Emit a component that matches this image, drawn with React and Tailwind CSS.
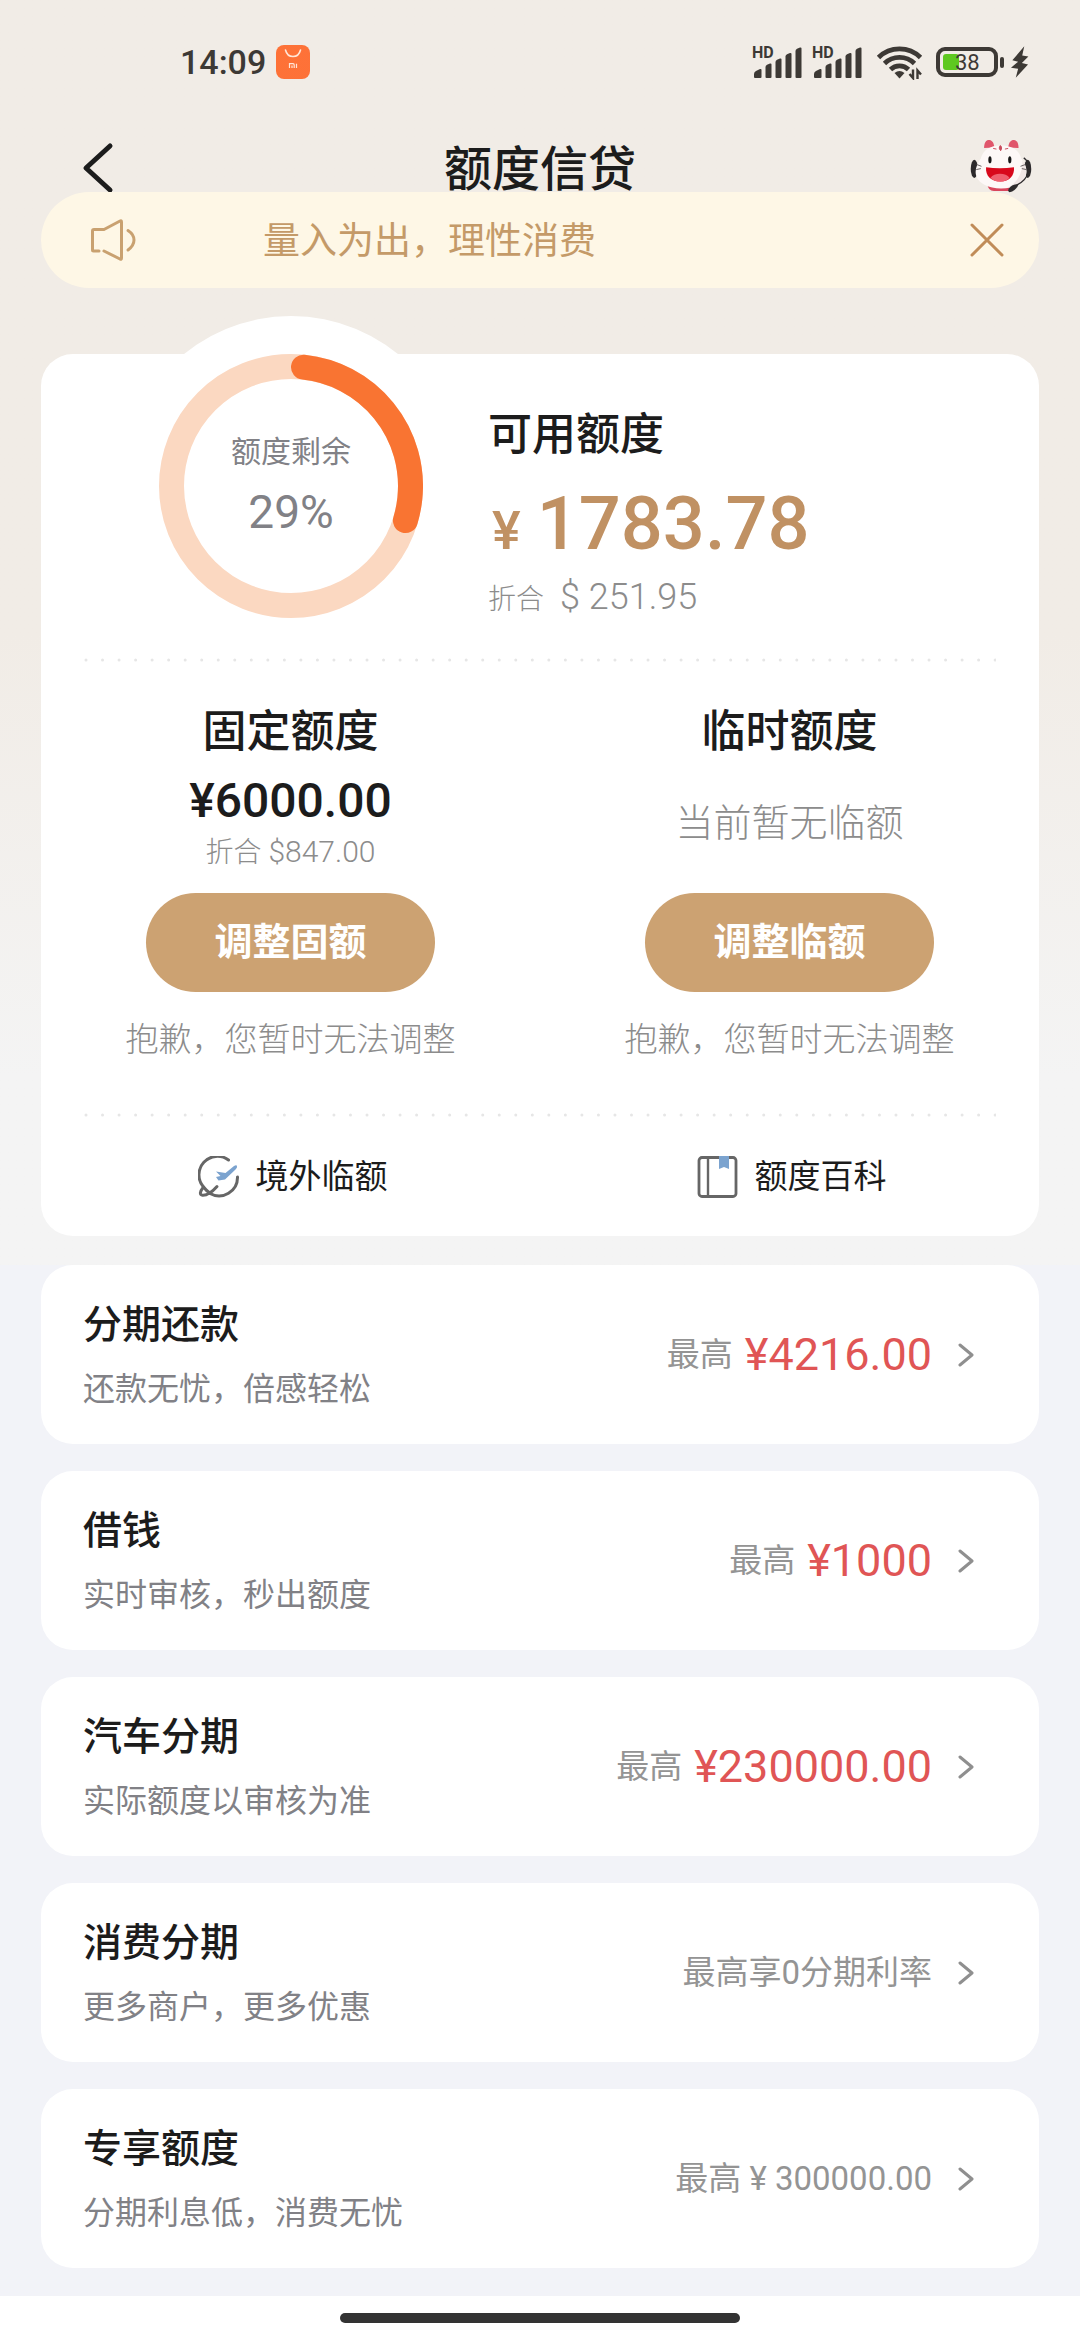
import React, { useState } from "react";

const PRODUCTS = [
  { name: "分期还款", desc: "还款无忧，倍感轻松", label: "最高", amount: "¥4216.00" },
  { name: "借钱", desc: "实时审核，秒出额度", label: "最高", amount: "¥1000" },
  { name: "汽车分期", desc: "实际额度以审核为准", label: "最高", amount: "¥230000.00" },
  { name: "消费分期", desc: "更多商户，更多优惠", label: "最高享0分期利率" },
  { name: "专享额度", desc: "分期利息低，消费无忧", label: "最高 ¥ 300000.00" },
];

function MiStoreIcon() {
  return (
    <svg className="size-[34px]" viewBox="0 0 34 34" fill="none">
      <defs>
        <linearGradient id="mi" x1="0" y1="34" x2="34" y2="0">
          <stop stopColor="#ff6f20" />
          <stop offset="1" stopColor="#fc744f" />
        </linearGradient>
      </defs>
      <rect width="34" height="34" rx="8" fill="url(#mi)" />
      <path d="M9.5 5c1 4 4 6.500 7.500 6.500S23.500 9 24.500 5" stroke="#ffe6d8" strokeWidth="1.600" strokeLinecap="round" />
      <path d="M13.500 23v-4.300h3.500q1.200 0 1.200 1.200V23M16 20.500V23M20.500 18.700V23" stroke="#ffe6d8" strokeWidth="1.200" />
    </svg>
  );
}

function Signal() {
  return (
    <svg className="h-[42px] w-[52px] overflow-visible" viewBox="0 -4 52 42" fill="#3d3935">
      <text x="0" y="13" fontSize="16" fontWeight="700" fontFamily="Roboto, sans-serif">HD</text>
      <path d="M2 32v-3q0-2 2-3l4-2q1.500-.5 1.500 1v7q0 1-1 1H3q-1 0-1-1z" />
      <path d="M13.500 32V22q0-1.500 1.500-2.200l3-1.200q1.500-.4 1.500 1V32q0 1-1 1h-4q-1 0-1-1z" />
      <path d="M23.500 32V17q0-1.500 1.500-2.200l3-1.200q1.500-.4 1.500 1V32q0 1-1 1h-4q-1 0-1-1z" />
      <path d="M33.500 32V11.500q0-1.500 1.500-2.200l3-1.200q1.500-.4 1.500 1V32q0 1-1 1h-4q-1 0-1-1z" />
      <path d="M43.500 32V6q0-1.500 1.500-2.200l3-1.200q1.500-.4 1.500 1V32q0 1-1 1h-4q-1 0-1-1z" />
    </svg>
  );
}

function Wifi() {
  return (
    <svg className="h-[36px] w-[48px]" viewBox="0 0 48 36" fill="none" stroke="#3d3935" strokeWidth="4.800">
      <path d="M2.500 13.500a30 30 0 0 1 42 0" />
      <path d="M8.500 19.500a21.500 21.500 0 0 1 30 0" />
      <path d="M14.500 25.500a13 13 0 0 1 18 0" />
      <path d="M18.500 29q5-4 10 0l-5 5.500z" fill="#3d3935" stroke="none" />
      <path d="M37 25.500V34l-3.500-4M41.500 35v-8.500l3.500 4" strokeWidth="2.400" />
    </svg>
  );
}

function Battery() {
  return (
    <svg className="h-[32px] w-[70px]" viewBox="0 0 70 32" fill="#3d3935">
      <rect x="2" y="3" width="58" height="26" rx="7" fill="none" stroke="#3d3935" strokeWidth="4" />
      <rect x="7" y="8" width="16" height="16" rx="3" fill="#5ec820" />
      <rect x="64" y="11" width="4" height="11" rx="2" />
      <text x="19" y="24" fontSize="22" fontFamily="Roboto, sans-serif">38</text>
    </svg>
  );
}

function Bolt() {
  return (
    <svg className="h-[32px] w-[19px]" viewBox="0 0 54 94" fill="#3d3935">
      <path d="M41 1 6 42l17 4L2 64l21 3-7 26 36-39-18-4 19-19-18-3z" />
    </svg>
  );
}

function Mascot() {
  return (
    <svg className="h-[54px] w-[62px]" viewBox="0 0 188 166" fill="none">
      <path d="M42 28C42 6 52 0 62 4c10 5 10 14 12 22zM148 28C148 6 138 0 128 4c-10 5-10 14-12 22z" fill="#e0566b" />
      <ellipse cx="12" cy="92" rx="11" ry="28" fill="#2d2a2c" />
      <ellipse cx="176" cy="92" rx="11" ry="28" fill="#2d2a2c" />
      <path d="M52 138h90q-2 20-22 22H72q-18-2-20-22z" fill="#d9465c" />
      <path d="M94 20c34 0 56 14 62 40 14 16 20 36 14 54-8 24-38 38-76 38s-68-14-76-38c-6-18 2-38 14-54 6-26 28-40 62-40z" fill="#fdf8f7" />
      <path d="M160 66c14 20 16 40 4 58-8 14-26 22-48 26 28-18 44-42 44-84z" fill="#f0e6e5" />
      <path d="M92 20c5 4 5 10 1 16-5-5-6-11-1-16zM70 29l10 2M116 29l-10 2" fill="#c94b5c" stroke="#c94b5c" strokeWidth="3" />
      <ellipse cx="60" cy="64" rx="5" ry="11" fill="#171717" />
      <ellipse cx="121" cy="64" rx="5" ry="11" fill="#171717" />
      <path d="M48 87q42 6 86 0c2 26-14 44-42 44S46 114 48 87z" fill="#d8081c" />
      <path d="M62 119c10-16 48-16 58 0-12 16-46 16-58 0z" fill="#ef6070" />
      <path d="M18 78l16 6M18 94l14-3M170 78l-16 6M172 94l-14-3" stroke="#4a4345" strokeWidth="2.500" />
      <path d="M164 58c14 10 18 24 14 42-4 20-18 34-40 44" stroke="#2d2a2c" strokeWidth="4" />
      <path d="M118 152q10-14 30-13-8 22-28 25-6-4-2-12z" fill="#2d2a2c" />
    </svg>
  );
}

function Speaker() {
  return (
    <svg className="h-[44px] w-[48px]" viewBox="0 0 48 44" fill="none" stroke="#c9a170" strokeWidth="3" strokeLinecap="round" strokeLinejoin="round">
      <path d="M10 33H4.500q-1 0-1-1V13q0-1.500 1.500-1.500h10L31 3q1.500-.8 1.500 1v36q0 2-1.500 1L15 33" />
      <path d="M39 12.500q6 4 6 9.500t-6 10" />
    </svg>
  );
}

function GlobePlane() {
  return (
    <svg className="size-[42px]" viewBox="0 0 42 42" fill="none">
      <path d="M30.500 4A18.500 18.500 0 0 0 5.500 31" stroke="#666" strokeWidth="3" strokeLinecap="round" />
      <path d="M39.500 21A18.500 18.500 0 0 1 12 37.500" stroke="#666" strokeWidth="3" strokeLinecap="round" />
      <path d="M5.500 31C1.500 36 1.500 39 4.500 39.200 9 39.500 15 35 19 30.500" stroke="#666" strokeWidth="3" strokeLinecap="round" />
      <path d="M5.500 31q3 4 7 6.500" stroke="#666" strokeWidth="3" />
      <path d="M18 15.500l9.500 1.500 8.500-7q2.500-1.500 3 0 .5 1.500-1.500 3.500L27 23.500l-6.500 1-2.500-3.500 4.500-1z" fill="#7ba3cf" />
    </svg>
  );
}

function Book() {
  return (
    <svg className="size-[42px]" viewBox="0 0 42 42" fill="none">
      <rect x="2" y="1.500" width="37" height="39" rx="3" stroke="#666" strokeWidth="2.800" />
      <path d="M11 1.500v39" stroke="#666" strokeWidth="2.400" />
      <path d="M22 0h10v13l-5-2-5 2z" fill="#7ba3cf" />
    </svg>
  );
}

function DottedLine() {
  return (
    <svg className="block h-1 w-full">
      <line x1="2" y1="2" x2="100%" y2="2" stroke="#e6e6e6" strokeWidth="3" strokeLinecap="round" strokeDasharray="0 16.530" />
    </svg>
  );
}

function Gauge({ percent }) {
  return (
    <div className="relative size-[264px] shrink-0">
      <div className="absolute -inset-[38px] rounded-full bg-white" />
      <svg className="absolute inset-0" viewBox="0 0 264 264" fill="none" strokeWidth="25">
        <circle cx="132" cy="132" r="119.500" stroke="#fbd8c1" />
        <circle
          cx="132" cy="132" r="119.500" stroke="#f97432" strokeLinecap="round" pathLength="100"
          strokeDasharray={`${percent - 1} 100`} transform="rotate(-84 132 132)"
        />
      </svg>
      <div className="relative flex h-full flex-col items-center justify-center pb-1 text-[#818186]">
        <span className="text-[30px] leading-[48px]">额度剩余</span>
        <span className="mt-2 text-[46px] leading-[56px]">{percent}%</span>
      </div>
    </div>
  );
}

function Quota({ title, action, children }) {
  return (
    <div className="flex flex-1 flex-col items-center">
      <h2 className="text-[44px] leading-[56px] font-medium text-[#1c1c1c]">{title}</h2>
      <div className="flex h-[133px] flex-col items-center justify-center pb-2">{children}</div>
      <button className="h-[99px] w-[289px] rounded-full bg-[#cca272] text-[38px] font-bold text-white">{action}</button>
      <p className="mt-6 text-[33px] leading-[48px] font-light text-[#8c8c8c]">抱歉，您暂时无法调整</p>
    </div>
  );
}

export default function App() {
  const [notice, setNotice] = useState(true);
  return (
    <div className="flex min-h-screen flex-col bg-[#f2f3f8] font-[Roboto,'Noto_Sans_CJK_SC',sans-serif] text-[#1c1c1c]">
      <div className="bg-linear-to-b from-[#f1ece6] from-50% to-[#f4f4f4] to-85% pb-[29px]">
        <div className="flex h-[124px] items-center justify-between pr-[51px] pl-[180px]">
          <div className="flex items-center gap-[10px]">
            <span className="text-[34px] leading-[40px] font-medium text-[#3d3935]">14:09</span>
            <MiStoreIcon />
          </div>
          <div className="flex items-center">
            <div className="flex items-center gap-2">
              <Signal />
              <Signal />
            </div>
            <div className="ml-3 flex items-center gap-3">
              <Wifi />
              <Battery />
            </div>
            <div className="ml-1 flex"><Bolt /></div>
          </div>
        </div>

        <header className="grid h-[88px] grid-cols-3 items-center px-12">
          <button aria-label="返回" className="justify-self-start pl-8">
            <svg className="h-[52px] w-[36px]" viewBox="0 0 36 52" fill="none" stroke="#1c1c1c" strokeWidth="5" strokeLinecap="round" strokeLinejoin="round">
              <path d="M30 4 6 26l24 22" />
            </svg>
          </button>
          <h1 className="justify-self-center pt-1 text-[48px] leading-[56px] font-medium">额度信贷</h1>
          <button aria-label="客服" className="justify-self-end pb-1"><Mascot /></button>
        </header>

        {notice && (
          <div className="relative mx-[41px] -mt-5 flex h-24 items-center rounded-full bg-[#fef7e6] pr-[35px] pl-12 text-[#c49a68]">
            <Speaker />
            <p className="ml-[126px] flex-1 pt-1 text-[37px] leading-[56px]">量入为出，理性消费</p>
            <button aria-label="关闭" onClick={() => setNotice(false)}>
              <svg className="size-[34px]" viewBox="0 0 34 34" stroke="#c08c58" strokeWidth="3" strokeLinecap="round">
                <path d="M2 2l30 30M32 2 2 32" />
              </svg>
            </button>
          </div>
        )}

        <section className="mx-[41px] mt-[66px] rounded-[32px] bg-white">
          <div className="flex pl-[118px]">
            <Gauge percent={29} />
            <div className="relative ml-[65px] pt-[53px]">
              <h2 className="text-[44px] leading-[56px] font-medium">可用额度</h2>
              <p className="mt-4 flex items-baseline gap-4 pl-1 text-[74px] leading-[90px] font-medium text-[#c09163]">
                <span className="text-[54px] leading-none">¥</span>
                <span>1783.78</span>
              </p>
              <p className="mt-2 flex items-baseline gap-4 font-light text-[#8c8c8c]">
                <span className="text-[28px] leading-none">折合</span>
                <span className="text-[36px] leading-[40px]">$ 251.95</span>
              </p>
            </div>
          </div>

          <div className="mt-[40px] px-[43px]"><DottedLine /></div>

          <div className="mt-[42px] flex">
            <Quota title="固定额度" action="调整固额">
              <p className="text-[48px] leading-[56px] font-medium">¥6000.00</p>
              <p className="mt-1 text-[28px] leading-[40px] font-light text-[#8c8c8c]">
                折合 <span className="text-[30px] leading-none">$847.00</span>
              </p>
            </Quota>
            <Quota title="临时额度" action="调整临额">
              <p className="text-[38px] leading-[56px] font-light text-[#8c8c8c]">当前暂无临额</p>
            </Quota>
          </div>

          <div className="mt-[49px] px-[43px]"><DottedLine /></div>

          <nav className="flex h-[119px] items-center">
            <a href="#overseas" className="flex flex-1 items-center justify-center gap-4 pl-1 text-[33px] leading-[48px]">
              <GlobePlane />
              境外临额
            </a>
            <a href="#wiki" className="flex flex-1 items-center justify-center gap-4 pl-1 text-[33px] leading-[48px]">
              <Book />
              额度百科
            </a>
          </nav>
        </section>
      </div>

      <main className="flex flex-col gap-[27px] px-[41px] pb-7">
        {PRODUCTS.map((p) => (
          <a key={p.name} href={`#${p.name}`} className="flex items-center justify-between rounded-[32px] bg-white pt-8 pr-[63px] pb-[31px] pl-[42px]">
            <div>
              <h3 className="text-[39px] leading-[56px] font-medium">{p.name}</h3>
              <p className="mt-3 text-[32px] leading-[48px] text-[#818186]">{p.desc}</p>
            </div>
            <div className="flex items-center">
              <p className="flex items-center gap-3 text-[33px] leading-[56px] text-[#949494]">
                {p.label}
                {p.amount && <span className="text-[45px] text-[#e05555]">{p.amount}</span>}
              </p>
              <svg className="ml-6 h-6 w-5" viewBox="0 0 20 24" fill="none" stroke="#8f8f8f" strokeWidth="3" strokeLinecap="round" strokeLinejoin="round">
                <path d="M4 2l12 10L4 22" />
              </svg>
            </div>
          </a>
        ))}
      </main>

      <footer className="flex h-11 items-center justify-center bg-white">
        <div className="h-[10px] w-[37%] rounded-full bg-[#333]" />
      </footer>
    </div>
  );
}
